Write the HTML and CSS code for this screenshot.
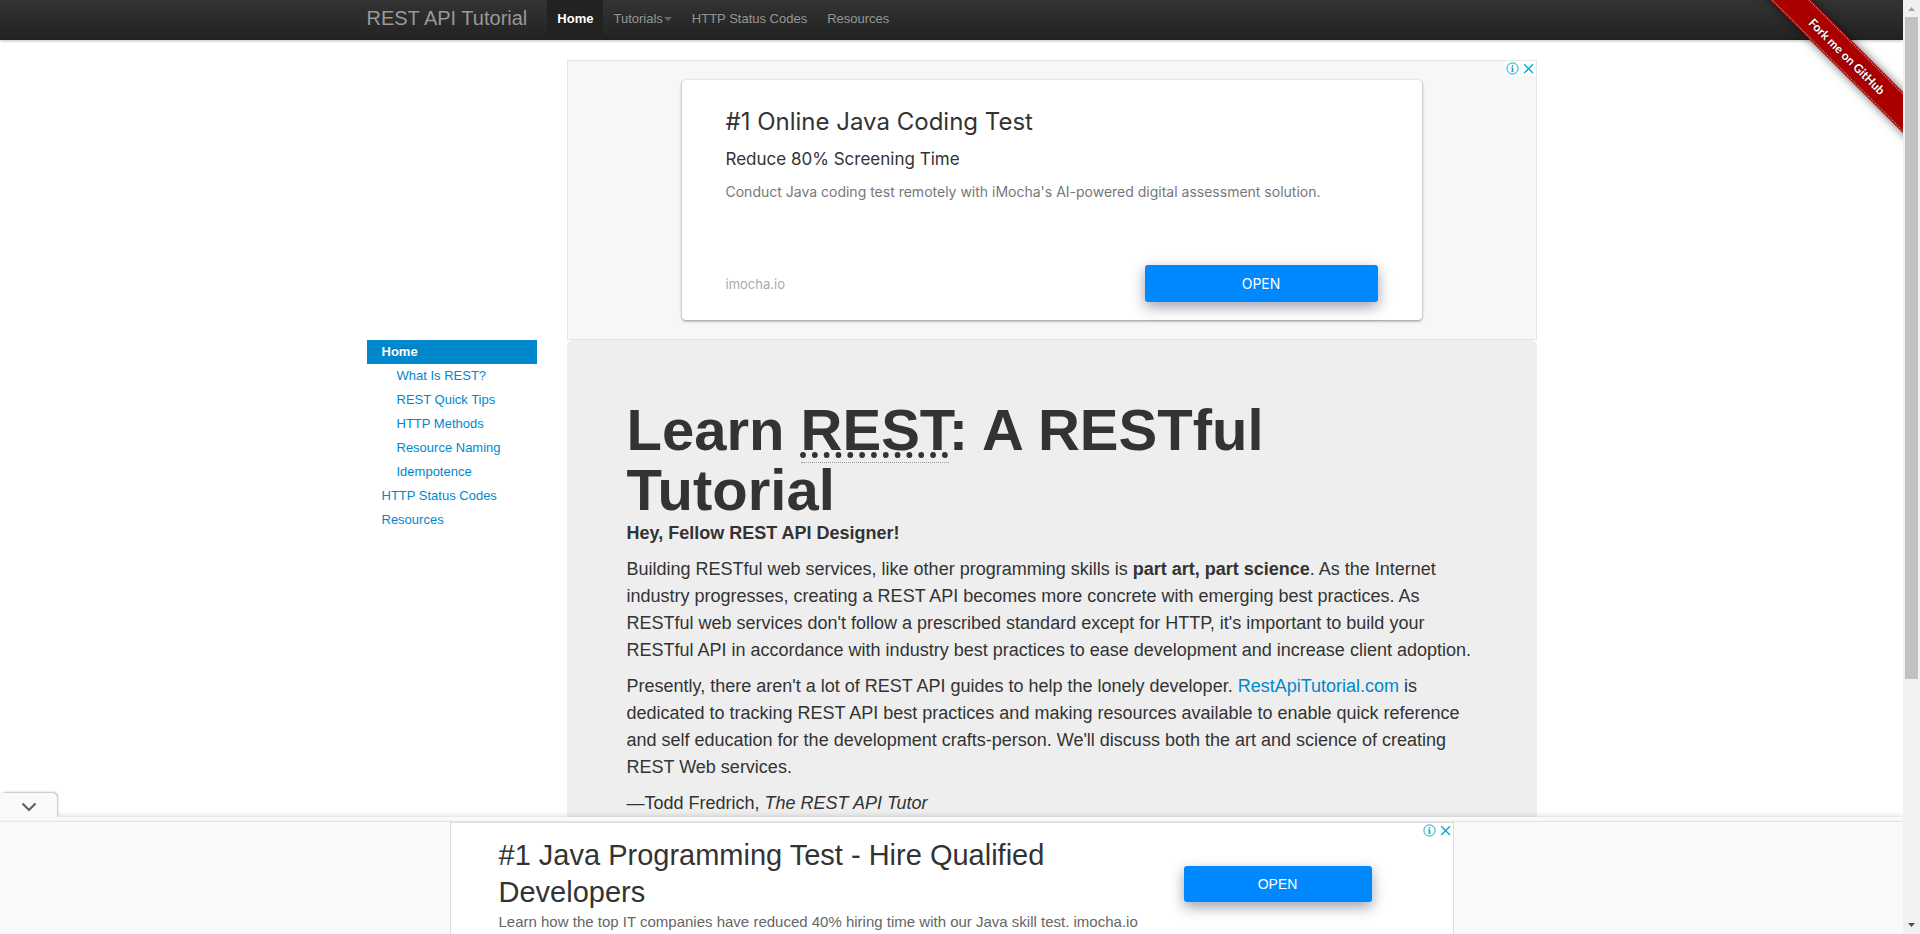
FILE: index.html
```html
<!DOCTYPE html>
<html lang="en">
<head>
<meta charset="utf-8">
<meta name="viewport" content="width=device-width, initial-scale=1">
<title>REST API Tutorial</title>
<link rel="stylesheet" href="styles.css">
</head>
<body>
<div class="page">
  <header class="navbar">
    <div class="container navbar-inner">
      <a class="brand" href="#">REST API Tutorial</a>
      <nav class="nav" aria-label="Main">
        <a class="nav-link active" href="#">Home</a>
        <a class="nav-link" href="#">Tutorials<span class="caret"></span></a>
        <a class="nav-link" href="#">HTTP Status Codes</a>
        <a class="nav-link" href="#">Resources</a>
      </nav>
    </div>
  </header>
  <div class="ribbon-corner"><a class="ribbon" href="#"><span class="ribbon-text">Fork me on GitHub</span></a></div>

  <div class="container layout">
    <section class="ad" aria-label="Advertisement">
      <div class="ad-choices">
        <button type="button" class="ad-icon" aria-label="Ad information"><svg viewBox="0 0 15 15"><circle cx="7.5" cy="7.5" r="5.6"/><path d="M7.5 6.5v4M7.5 4v1.4" stroke-width="1.6"/><path d="M6.3 6.8h1.2M6.3 10.6h2.4" stroke-width=".8"/></svg></button>
        <button type="button" class="ad-icon" aria-label="Close ad"><svg viewBox="0 0 15 15"><path d="M3.2 3.2l8.8 8.8M12 3.2L3.2 12" stroke-width="1.4"/></svg></button>
      </div>
      <div class="ad-card">
        <h2 class="ad-title">#1 Online Java Coding Test</h2>
        <p class="ad-subtitle">Reduce 80% Screening Time</p>
        <p class="ad-desc">Conduct Java coding test remotely with iMocha's AI-powered digital assessment solution.</p>
        <div class="ad-footer">
          <span class="ad-url">imocha.io</span>
          <button type="button" class="open-button">OPEN</button>
        </div>
      </div>
    </section>

    <nav class="sidebar" aria-label="Sections">
      <a class="side-link active" href="#">Home</a>
      <a class="side-link sub" href="#">What Is REST?</a>
      <a class="side-link sub" href="#">REST Quick Tips</a>
      <a class="side-link sub" href="#">HTTP Methods</a>
      <a class="side-link sub" href="#">Resource Naming</a>
      <a class="side-link sub" href="#">Idempotence</a>
      <a class="side-link" href="#">HTTP Status Codes</a>
      <a class="side-link" href="#">Resources</a>
    </nav>

    <main class="hero">
      <h1>Learn <abbr title="Representational State Transfer">REST</abbr>: A RESTful Tutorial</h1>
      <p><strong>Hey, Fellow REST API Designer!</strong></p>
      <p>Building RESTful web services, like other programming skills is <strong>part art, part science</strong>. As the Internet industry progresses, creating a REST API becomes more concrete with emerging best practices. As RESTful web services don't follow a prescribed standard except for HTTP, it's important to build your RESTful API in accordance with industry best practices to ease development and increase client adoption.</p>
      <p>Presently, there aren't a lot of REST API guides to help the lonely developer. <a href="#">RestApiTutorial.com</a> is dedicated to tracking REST API best practices and making resources available to enable quick reference and self education for the development crafts-person. We'll discuss both the art and science of creating REST Web services.</p>
      <p>—Todd Fredrich, <em>The REST API Tutor</em></p>
    </main>
  </div>

  <aside class="anchor-ad" aria-label="Advertisement">
    <button type="button" class="anchor-toggle" aria-label="Collapse ad"><svg viewBox="0 0 16 10"><path d="M1.5 1.5L8 8l6.500-6.500"/></svg></button>
    <div class="anchor-body">
      <div class="anchor-card">
        <div class="anchor-copy">
          <h2 class="anchor-title">#1 Java Programming Test - Hire Qualified Developers</h2>
          <p class="anchor-desc">Learn how the top IT companies have reduced 40% hiring time with our Java skill test. imocha.io</p>
        </div>
        <button type="button" class="open-button small">OPEN</button>
        <div class="ad-choices">
          <button type="button" class="ad-icon" aria-label="Ad information"><svg viewBox="0 0 15 15"><circle cx="7.5" cy="7.5" r="5.6"/><path d="M7.5 6.5v4M7.5 4v1.4" stroke-width="1.6"/><path d="M6.3 6.8h1.2M6.3 10.6h2.4" stroke-width=".8"/></svg></button>
          <button type="button" class="ad-icon" aria-label="Close ad"><svg viewBox="0 0 15 15"><path d="M3.2 3.2l8.8 8.8M12 3.2L3.2 12" stroke-width="1.4"/></svg></button>
        </div>
      </div>
    </div>
  </aside>
</div>
<div class="scrollbar" aria-hidden="true">
  <svg class="scroll-arrow" viewBox="0 0 17 17"><path d="M5 11l3.500-4 3.500 4z" fill="#a3a3a3"/></svg>
  <div class="scroll-track"><div class="scroll-thumb"></div></div>
  <svg class="scroll-arrow" viewBox="0 0 17 17"><path d="M5 6l3.500 4 3.500-4z" fill="#505050"/></svg>
</div>
</body>
</html>
```

FILE: styles.css
```css
* { box-sizing: border-box; }

body {
  display: flex;
  height: 100vh;
  margin: 0;
  overflow: hidden;
  background: #fff;
  color: #333;
  font: 13px/18px "Liberation Sans", Arial, sans-serif;
}

h1, h2, p { margin: 0; }
a { color: #08c; text-decoration: none; }
button { padding: 0; border: 0; font: inherit; cursor: pointer; }

.page {
  position: relative;
  flex: 1;
  min-width: 0;
  overflow: hidden;
}

.container {
  width: 100%;
  max-width: 1170px;
  margin: 0 auto;
}

/* Top bar */
.navbar {
  background: linear-gradient(#333, #222);
  box-shadow: 0 1px 3px rgba(0, 0, 0, .25), inset 0 -1px 0 rgba(0, 0, 0, .1);
}
.navbar-inner { display: flex; height: 40px; }
.brand {
  padding: 8px 20px 12px 0;
  color: #999;
  font-size: 20px;
  line-height: 20px;
  white-space: nowrap;
}
.nav { display: flex; }
.nav-link {
  display: flex;
  padding: 10px 10px 12px;
  color: #999;
  text-shadow: 0 -1px 0 rgba(0, 0, 0, .25);
  white-space: nowrap;
}
.nav-link.active { background: #222; color: #fff; font-weight: bold; }
.caret {
  width: 8px;
  height: 4px;
  margin: 7px 0 0 1px;
  border: 4px solid transparent;
  border-top-color: #666;
  border-bottom: 0;
}

/* Corner ribbon */
.ribbon-corner {
  position: absolute;
  top: 0;
  right: 0;
  width: 160px;
  height: 160px;
  overflow: hidden;
}
.ribbon {
  position: absolute;
  top: 42px;
  right: -56px;
  width: 224px;
  height: 29px;
  padding: 1px 0;
  transform: rotate(45deg);
  background: #a00;
  box-shadow: 0 0 10px rgba(0, 0, 0, .6);
  color: #fff;
}
.ribbon-text {
  display: block;
  border: 1px dotted #e0a0a0;
  border-width: 1px 0;
  font: bold 12px/25px Lato, sans-serif;
  text-align: center;
  text-shadow: 0 0 3px rgba(0, 0, 0, .5);
}

/* Page grid */
.layout {
  display: grid;
  grid-template-columns: 170px minmax(0, 1fr);
  column-gap: 30px;
  align-items: start;
  padding-top: 20px;
}

.ad {
  position: relative;
  grid-column: 2;
  padding: 19px 114px;
  border: 1px solid #e5e5e5;
  background: #f7f7f7;
}
.ad-card {
  display: flex;
  flex-direction: column;
  height: 240px;
  padding: 24px 44px 18px;
  border-radius: 4px;
  background: #fff;
  box-shadow: 0 1px 3px rgba(0, 0, 0, .45);
  font-family: Inter, sans-serif;
}
.ad-title { font-size: 24px; font-weight: 400; line-height: 36px; }
.ad-subtitle { margin-top: 6px; font-size: 17px; line-height: 26px; }
.ad-desc { margin-top: 8px; color: #777; font-size: 14px; line-height: 24px; }
.ad-footer {
  display: flex;
  align-items: center;
  justify-content: space-between;
  margin-top: auto;
}
.ad-url { color: #aaa; font-size: 13px; }

.open-button {
  width: 233px;
  height: 37px;
  border-radius: 3px;
  background: #08f;
  box-shadow: 0 5px 14px rgba(40, 45, 70, .45);
  color: #fff;
  font-size: 14px;
}
.open-button.small { flex: none; width: 188px; height: 36px; }

.ad-choices {
  position: absolute;
  top: 0;
  right: 0;
  display: flex;
  gap: 1px;
}
.ad-icon { width: 15px; height: 15px; background: #fff; }
.ad-icon svg { display: block; fill: none; stroke: #00aecd; }

/* Sidebar */
.sidebar { display: flex; flex-direction: column; }
.side-link { padding: 3px 15px; }
.side-link.sub { padding-left: 30px; }
.side-link.active {
  background: #08c;
  color: #fff;
  font-weight: bold;
  text-shadow: 0 -1px 0 rgba(0, 0, 0, .2);
}

/* Main panel */
.hero {
  padding: 60px;
  border-radius: 6px;
  background: #eee;
  font-size: 18px;
  line-height: 27px;
}
.hero h1 { font-size: 58px; line-height: 60px; }
.hero p { margin-bottom: 9px; }
.hero abbr {
  border-bottom: 1px dotted #999;
  text-decoration: underline dotted;
}

/* Bottom ad */
.anchor-ad {
  position: absolute;
  right: 0;
  bottom: 0;
  left: 0;
  padding-top: 5px;
  background: #fafafa;
  box-shadow: 0 0 6px rgba(0, 0, 0, .2);
}
.anchor-toggle {
  position: absolute;
  bottom: 100%;
  left: 0;
  display: grid;
  place-items: center;
  width: 57px;
  height: 24px;
  padding-top: 4px;
  border-radius: 5px 5px 0 0;
  background: #fafafa;
  box-shadow: 1px -1px 2px rgba(0, 0, 0, .25);
}
.anchor-toggle svg { width: 16px; fill: none; stroke: #616161; stroke-width: 2.2; }
.anchor-body {
  position: relative;
  background: #fafafa;
  box-shadow: 0 0 2px rgba(0, 0, 0, .25);
}
.anchor-card {
  position: relative;
  display: flex;
  align-items: flex-start;
  justify-content: space-between;
  max-width: 1004px;
  height: 112px;
  margin: 0 auto;
  padding: 14px 81px 0 48px;
  border: 1px solid #ddd;
  border-bottom: 0;
  background: #fff;
}
.anchor-copy { max-width: 640px; }
.anchor-title { font-size: 29px; font-weight: 400; line-height: 37px; }
.anchor-desc { color: #666; font-size: 15px; line-height: 22px; }
.anchor-card .open-button { margin-top: 29px; }

/* Window scrollbar */
.scrollbar {
  display: flex;
  flex-direction: column;
  flex: none;
  width: 17px;
  background: #f1f1f1;
}
.scroll-arrow { flex: none; width: 17px; height: 17px; }
.scroll-track { flex: 1; padding: 0 2px; }
.scroll-thumb { height: 73.5%; background: #c1c1c1; }
```
